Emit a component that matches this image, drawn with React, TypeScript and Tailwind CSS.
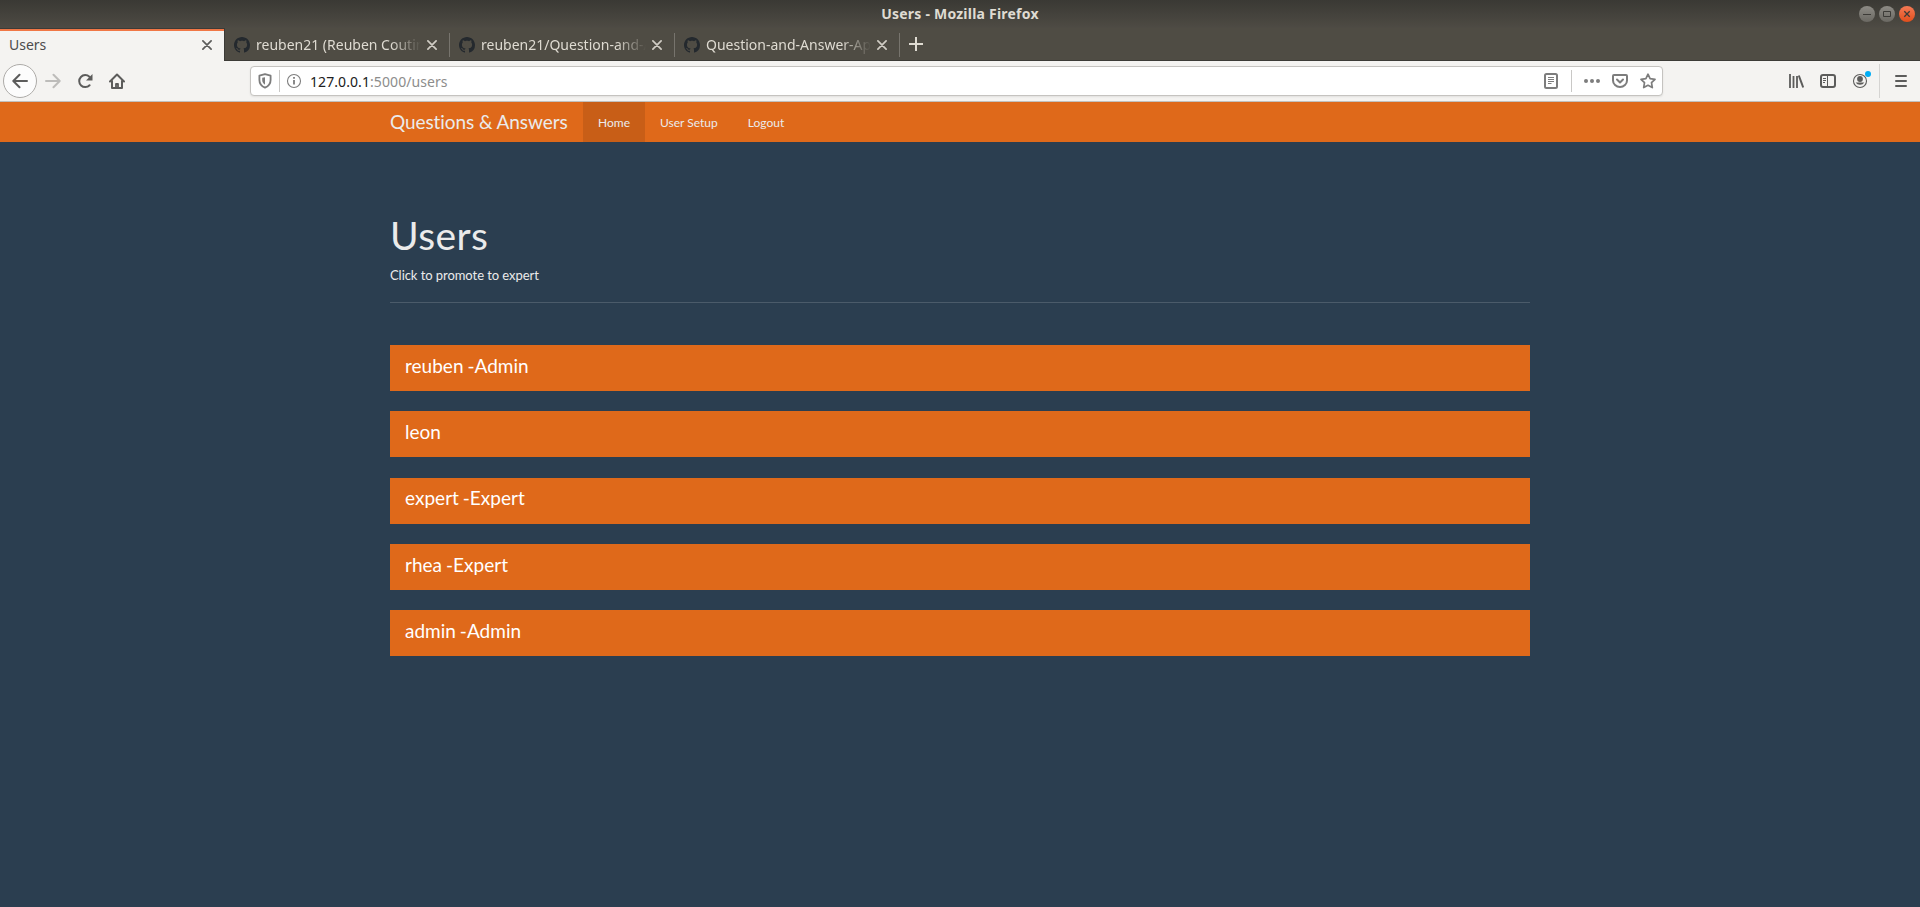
import React from "react";

const GITHUB_PATH =
  "M8 0C3.58 0 0 3.58 0 8c0 3.54 2.29 6.53 5.47 7.59.4.07.55-.17.55-.38 0-.19-.01-.82-.01-1.49-2.01.37-2.53-.49-2.69-.94-.09-.23-.48-.94-.82-1.13-.28-.15-.68-.52-.01-.53.63-.01 1.08.58 1.23.82.72 1.21 1.87.87 2.33.66.07-.52.28-.87.51-1.07-1.78-.2-3.64-.89-3.64-3.95 0-.87.31-1.59.82-2.15-.08-.2-.36-1.02.08-2.12 0 0 .67-.21 2.2.82.64-.18 1.32-.27 2-.27s1.36.09 2 .27c1.53-1.04 2.2-.82 2.2-.82.44 1.1.16 1.92.08 2.12.51.56.82 1.27.82 2.15 0 3.07-1.87 3.75-3.65 3.95.29.25.54.73.54 1.48 0 1.07-.01 1.93-.01 2.2 0 .21.15.46.55.38A8.01 8.01 0 0 0 16 8c0-4.42-3.58-8-8-8z";

function GitHubMark() {
  return (
    <svg viewBox="0 0 16 16" className="h-4 w-4 shrink-0" fill="#24292e">
      <path d={GITHUB_PATH} />
    </svg>
  );
}

function CloseX({ color }: { color: string }) {
  return (
    <svg viewBox="0 0 10 10" className="h-2.5 w-2.5 shrink-0" stroke={color} strokeWidth="1.7" strokeLinecap="round">
      <path d="M.9.9l8.2 8.2M9.1.9L.9 9.1" />
    </svg>
  );
}

function TitleBar() {
  return (
    <div className="flex h-7 items-center bg-linear-to-b from-[#3a3934] to-[#4e4b44] pr-[5px]">
      <div className="w-[61px]" />
      <div className="flex-1 text-center text-[14px] leading-7 font-bold tracking-[0.22px] text-[#dfdbd2]">
        Users - Mozilla Firefox
      </div>
      <div className="flex w-14 gap-1">
        <svg viewBox="0 0 16 16" className="h-4 w-4">
          <defs>
            <linearGradient id="button-gray" x1="0" y1="0" x2="0" y2="1">
              <stop offset="0" stopColor="#8d8b85" />
              <stop offset="1" stopColor="#6a6862" />
            </linearGradient>
            <linearGradient id="button-orange" x1="0" y1="0" x2="0" y2="1">
              <stop offset="0" stopColor="#f47a55" />
              <stop offset="1" stopColor="#e04e1c" />
            </linearGradient>
          </defs>
          <circle cx="8" cy="8" r="8" fill="url(#button-gray)" />
          <path d="M4 8.5h8" stroke="#3c3b37" />
        </svg>
        <svg viewBox="0 0 16 16" className="h-4 w-4">
          <circle cx="8" cy="8" r="8" fill="url(#button-gray)" />
          <path d="M4.5 5.5h7v5h-7z" fill="none" stroke="#3c3b37" />
        </svg>
        <svg viewBox="0 0 16 16" className="h-4 w-4">
          <circle cx="8" cy="8" r="8" fill="url(#button-orange)" />
          <path d="M5.3 5.3l5.4 5.4M10.7 5.3l-5.4 5.4" stroke="#3c3b37" strokeWidth="1.3" />
        </svg>
      </div>
    </div>
  );
}

function Tab({ label }: { label: string }) {
  return (
    <div className="flex h-[33px] w-[225px] items-center pl-[9px]">
      <GitHubMark />
      <div className="ml-1.5 w-[165px] whitespace-nowrap text-[#dfdbd2] mask-[linear-gradient(to_right,black_135px,transparent_165px)]">
        {label}
      </div>
      <div className="ml-[6px] flex flex-1">
        <CloseX color="#d0ccc4" />
      </div>
      <div className="h-6 w-px bg-[#77746d]" />
    </div>
  );
}

function TabStrip() {
  return (
    <div className="flex h-[33px] bg-[#4f4c44] text-[14px]">
      <div className="h-[33px] w-[224px] border-t border-[#3c3b37]">
        <div className="flex h-8 items-center border-t-2 border-[#f07746] bg-[#f4f3f1] pr-3 pb-0.5 pl-[9px] text-[#4c4c4c]">
          <span className="-mt-px flex-1">Users</span>
          <CloseX color="#5c5c5b" />
        </div>
      </div>
      <div className="flex flex-1 border-b border-l border-[#3c3b37]">
        <Tab label="reuben21 (Reuben Coutin" />
        <Tab label="reuben21/Question-and-A" />
        <Tab label="Question-and-Answer-Ap" />
        <svg viewBox="0 0 14 14" className="mt-[9px] ml-[9px] h-[14px] w-[14px]" stroke="#dfdbd2" strokeWidth="2">
          <path d="M7 0v14M0 7h14" />
        </svg>
      </div>
    </div>
  );
}

function Toolbar() {
  return (
    <div className="flex h-[41px] items-center border-b border-[#c2c0bd] bg-[#f4f3f1]">
      <div className="ml-[3px] flex h-[34px] w-[34px] items-center justify-center rounded-full border border-[#adaba8] bg-[#fcfcfc]">
        <svg viewBox="0 0 16 16" className="h-4 w-4" fill="none" stroke="#5c5c5b" strokeWidth="2" strokeLinecap="round" strokeLinejoin="round">
          <path d="M15 8H1.5M7.5 1.8L1.3 8l6.2 6.2" />
        </svg>
      </div>
      <svg viewBox="0 0 16 16" className="ml-2 h-4 w-4" fill="none" stroke="#bdbcba" strokeWidth="2" strokeLinecap="round" strokeLinejoin="round">
        <path d="M1 8h13.5M8.5 1.8L14.7 8l-6.2 6.2" />
      </svg>
      <svg viewBox="0 0 16 16" className="ml-4 h-4 w-4" fill="none" stroke="#5c5c5b" strokeWidth="2">
        <path d="M12.6 12.2A6 6 0 1 1 12.4 3.8" strokeLinecap="round" />
        <path d="M15.5 1v6.5H9z" fill="#5c5c5b" stroke="none" />
      </svg>
      <svg viewBox="0 0 16 16" className="ml-4 h-4 w-4" fill="none" stroke="#5c5c5b" strokeWidth="2" strokeLinejoin="round" strokeLinecap="round">
        <path d="M1 8.5L8 1.5l7 7M3 8v7h10V8" />
        <path d="M7 15v-4h2v4" strokeWidth="1.8" />
      </svg>
      <div className="ml-[125px] flex h-[30px] w-[1413px] items-center rounded-[4px] border border-[#c5c3c0] bg-white shadow-[0_1px_2px_rgba(0,0,0,0.08)]">
        <svg viewBox="0 0 16 16" className="ml-[6px] h-4 w-4" fill="none" stroke="#7d7d7d" strokeWidth="1.8">
          <path d="M8 1.2l5.6 1.5v4.3c0 3.8-2.5 6.4-5.6 7.7-3.1-1.3-5.6-3.9-5.6-7.7V2.7z" strokeLinejoin="round" />
          <path d="M8 4.2v7.5C6.2 10.6 5.2 9 5.2 7V4.8z" fill="#7d7d7d" stroke="none" />
        </svg>
        <div className="ml-[6px] h-[22px] w-px bg-[#c9c8c6]" />
        <svg viewBox="0 0 16 16" className="ml-[6px] h-4 w-4" fill="none" stroke="#7d7d7d">
          <circle cx="8" cy="8" r="6.5" strokeWidth="1.1" />
          <path d="M8 7v4.5M8 4v1.8" strokeWidth="1.8" />
        </svg>
        <div className="ml-2 flex-1 text-[14px] tracking-[0.08px] text-[#8d8d8c]">
          <span className="text-[#202020]">127.0.0.1</span>:5000/users
        </div>
        <svg viewBox="0 0 16 16" className="h-4 w-4" fill="none" stroke="#7d7d7d">
          <rect x="2" y="1" width="12" height="14" rx="1.5" strokeWidth="2" />
          <path d="M5 4.5h6M5 6.5h6M5 8.5h6M5 10.5h3.5" />
        </svg>
        <div className="ml-3 h-[22px] w-px bg-[#c9c8c6]" />
        <svg viewBox="0 0 16 16" className="ml-3 h-4 w-4" fill="#7d7d7d">
          <circle cx="2" cy="8" r="2" />
          <circle cx="8" cy="8" r="2" />
          <circle cx="14" cy="8" r="2" />
        </svg>
        <svg viewBox="0 0 16 16" className="ml-3 h-4 w-4" fill="none" stroke="#7d7d7d" strokeWidth="2" strokeLinecap="round" strokeLinejoin="round">
          <path d="M2 2h12a1 1 0 0 1 1 1v4.5a7 6.5 0 0 1-14 0V3a1 1 0 0 1 1-1z" />
          <path d="M5 6.5l3 3 3-3" />
        </svg>
        <svg viewBox="0 0 16 16" className="mr-1.5 ml-3 h-4 w-4" fill="none" stroke="#7d7d7d" strokeWidth="1.7" strokeLinejoin="round">
          <path d="M8 1.2l2.1 4.4 4.9.7-3.5 3.4.8 4.9L8 12.3l-4.3 2.3.8-4.9L1 6.3l4.9-.7z" />
        </svg>
      </div>
      <div className="flex-1" />
      <svg viewBox="0 0 16 16" className="h-4 w-4" fill="none" stroke="#5c5c5b" strokeWidth="2">
        <path d="M2 1v14M5.5 3v12M9 3v12" strokeWidth="1.8" />
        <path d="M10.8 2.5L15.2 14.5" />
      </svg>
      <svg viewBox="0 0 16 16" className="ml-4 h-4 w-4" fill="none" stroke="#5c5c5b">
        <rect x="1" y="2" width="14" height="12" rx="2" strokeWidth="2" />
        <path d="M7.5 2v12M3 5.5h3M3 7.5h3M3 9.5h2" />
      </svg>
      <svg viewBox="0 0 19 20" className="mb-1 ml-4 h-5 w-[19px]" fill="#5c5c5b">
        <circle cx="8" cy="12" r="6.5" fill="none" stroke="#5c5c5b" strokeWidth="1.1" />
        <circle cx="8" cy="10" r="2.9" />
        <path d="M3.6 13.4h8.8a5 4.4 0 0 1-8.8 0z" />
        <circle cx="16" cy="5" r="3" fill="#00adf5" />
      </svg>
      <div className="ml-2 h-[34px] w-px bg-[#d5d4d2]" />
      <svg viewBox="0 0 16 16" className="mr-[11px] ml-[13px] h-4 w-4" fill="none" stroke="#5c5c5b" strokeWidth="2" strokeLinecap="round">
        <path d="M3 3h10M3 8h10M3 13h10" />
      </svg>
    </div>
  );
}

function NavBar() {
  return (
    <nav className="flex h-10 bg-[#df691a] pl-[390px] text-[12px] leading-[41px] text-[#ebebeb]">
      <div className="w-[193px] text-[19px] leading-10 tracking-[-0.08px] whitespace-nowrap">Questions &amp; Answers</div>
      <div className="bg-[#c85e17] px-[15px]">Home</div>
      <div className="px-[15px]">User Setup</div>
      <div className="px-[15px]">Logout</div>
    </nav>
  );
}

const USERS = ["reuben -Admin", "leon", "expert -Expert", "rhea -Expert", "admin -Admin"];

export default function App() {
  return (
    <div className="flex h-[907px] w-[1920px] flex-col overflow-hidden bg-[#2b3e50]">
      <div className="font-['Noto_Sans',sans-serif]">
        <TitleBar />
        <TabStrip />
        <Toolbar />
      </div>
      <div className="font-['Lato',sans-serif] [font-variant-ligatures:none]">
        <NavBar />
        <main className="mx-[390px] pt-[72px] text-[#ebebeb]">
          <h1 className="text-[39px] leading-[43px] tracking-[0.4px]">Users</h1>
          <p className="mt-2 text-[13px] leading-5 tracking-[-0.06px]">Click to promote to expert</p>
          <hr className="mt-[17px] border-[#4b5b6a]" />
          <ul className="mt-[42px] flex flex-col gap-[20.3px]">
            {USERS.map((user) => (
              <li key={user} className="flex h-[46px] items-start bg-[#df691a] px-[15px] text-[19px] leading-[42px] tracking-[0.02px] text-white [word-spacing:-1px]">
                <span className="mt-[-0.25px]">{user}</span>
              </li>
            ))}
          </ul>
        </main>
      </div>
    </div>
  );
}
